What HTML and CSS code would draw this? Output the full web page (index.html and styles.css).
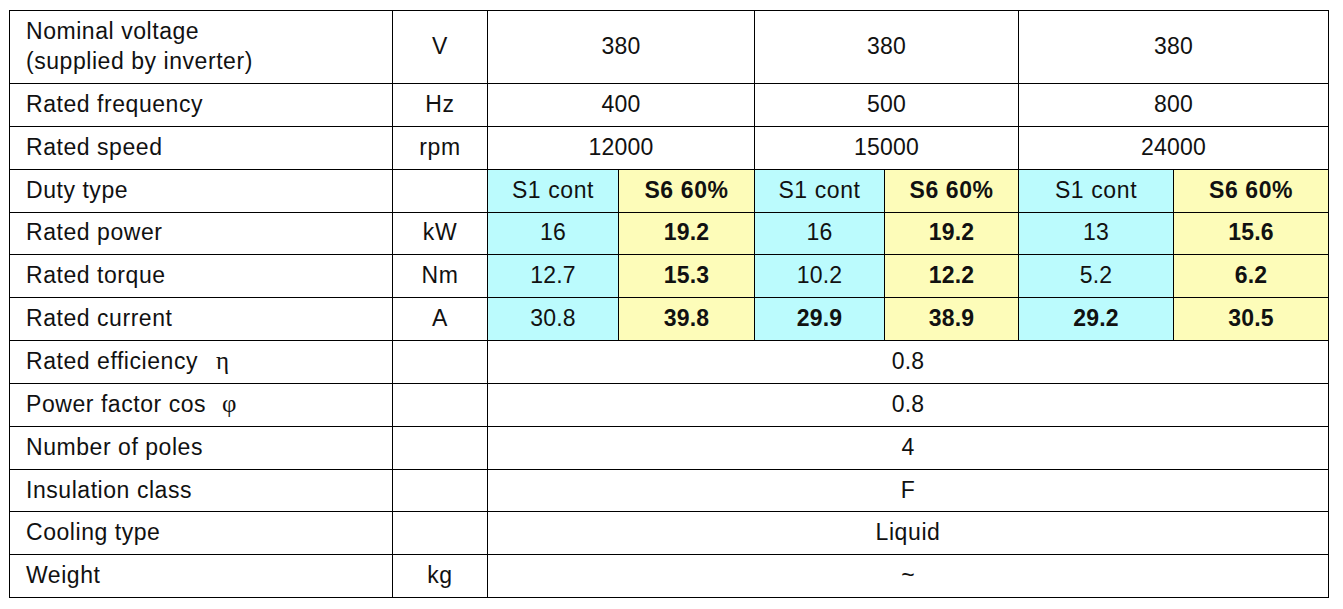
FILE: index.html
```html
<!DOCTYPE html>
<html lang="en">
<head>
<meta charset="utf-8">
<title>Motor specifications</title>
<link rel="stylesheet" href="styles.css">
</head>
<body>
<div class="page">
<table class="spec">
  <colgroup>
    <col class="c-name"><col class="c-unit">
    <col class="c-a1"><col class="c-a2">
    <col class="c-b1"><col class="c-b2">
    <col class="c-c1"><col class="c-c2">
  </colgroup>
  <tbody>
    <tr class="tall">
      <td class="name">Nominal voltage<br>(supplied by inverter)</td>
      <td class="unit">V</td>
      <td colspan="2">380</td>
      <td colspan="2">380</td>
      <td colspan="2">380</td>
    </tr>
    <tr>
      <td class="name">Rated frequency</td>
      <td class="unit">Hz</td>
      <td colspan="2">400</td>
      <td colspan="2">500</td>
      <td colspan="2">800</td>
    </tr>
    <tr>
      <td class="name">Rated speed</td>
      <td class="unit">rpm</td>
      <td colspan="2">12000</td>
      <td colspan="2">15000</td>
      <td colspan="2">24000</td>
    </tr>
    <tr>
      <td class="name">Duty type</td>
      <td class="unit"></td>
      <td class="cont word">S1 cont</td>
      <td class="peak b word">S6 60%</td>
      <td class="cont word">S1 cont</td>
      <td class="peak b word">S6 60%</td>
      <td class="cont word">S1 cont</td>
      <td class="peak b word">S6 60%</td>
    </tr>
    <tr>
      <td class="name">Rated power</td>
      <td class="unit">kW</td>
      <td class="cont">16</td>
      <td class="peak b">19.2</td>
      <td class="cont">16</td>
      <td class="peak b">19.2</td>
      <td class="cont">13</td>
      <td class="peak b">15.6</td>
    </tr>
    <tr>
      <td class="name">Rated torque</td>
      <td class="unit">Nm</td>
      <td class="cont">12.7</td>
      <td class="peak b">15.3</td>
      <td class="cont">10.2</td>
      <td class="peak b">12.2</td>
      <td class="cont">5.2</td>
      <td class="peak b">6.2</td>
    </tr>
    <tr>
      <td class="name">Rated current</td>
      <td class="unit">A</td>
      <td class="cont">30.8</td>
      <td class="peak b">39.8</td>
      <td class="cont b">29.9</td>
      <td class="peak b">38.9</td>
      <td class="cont b">29.2</td>
      <td class="peak b">30.5</td>
    </tr>
    <tr>
      <td class="name">Rated efficiency&nbsp;&nbsp;<span class="greek eta">η</span></td>
      <td class="unit"></td>
      <td colspan="6">0.8</td>
    </tr>
    <tr>
      <td class="name">Power factor cos&nbsp;&nbsp;<span class="greek">φ</span></td>
      <td class="unit"></td>
      <td colspan="6">0.8</td>
    </tr>
    <tr>
      <td class="name">Number of poles</td>
      <td class="unit"></td>
      <td colspan="6">4</td>
    </tr>
    <tr>
      <td class="name">Insulation class</td>
      <td class="unit"></td>
      <td colspan="6" class="word">F</td>
    </tr>
    <tr>
      <td class="name">Cooling type</td>
      <td class="unit"></td>
      <td colspan="6" class="word">Liquid</td>
    </tr>
    <tr>
      <td class="name">Weight</td>
      <td class="unit">kg</td>
      <td colspan="6">~</td>
    </tr>
  </tbody>
</table>
</div>
</body>
</html>
```
FILE: styles.css
```css
html, body {
  margin: 0;
  padding: 0;
  background: #ffffff;
}

.page {
  padding: 10px 0 0 9px;
}

.spec {
  border-collapse: collapse;
  table-layout: fixed;
  width: 1319px;
  font-family: "Liberation Sans", Arial, sans-serif;
  font-size: 23px;
  color: #111111;
}

.c-name { width: 383px; }
.c-unit { width: 95px; }
.c-a1 { width: 131px; }
.c-a2 { width: 136px; }
.c-b1 { width: 130px; }
.c-b2 { width: 134px; }
.c-c1 { width: 155px; }
.c-c2 { width: 155px; }

.spec tr {
  height: 42.85px;
}

.spec tr.tall {
  height: 73px;
}

.spec td {
  border: 1px solid #000000;
  padding: 0 0 2px 0;
  text-align: center;
  vertical-align: middle;
  line-height: 30px;
  white-space: nowrap;
  letter-spacing: 0.2px;
}

.spec td.name {
  text-align: left;
  padding-left: 16px;
  letter-spacing: 0.55px;
}

.spec td.unit,
.spec td.word {
  letter-spacing: 0.6px;
}

.cont {
  background: #bbfbfd;
}

.peak {
  background: #fdfcb9;
}

.b {
  font-weight: bold;
}

.greek {
  font-family: "Liberation Serif", "Times New Roman", serif;
  font-size: 25px;
  letter-spacing: 0;
  margin-left: 2px;
}

.greek.eta {
  margin-left: 4px;
}
```
